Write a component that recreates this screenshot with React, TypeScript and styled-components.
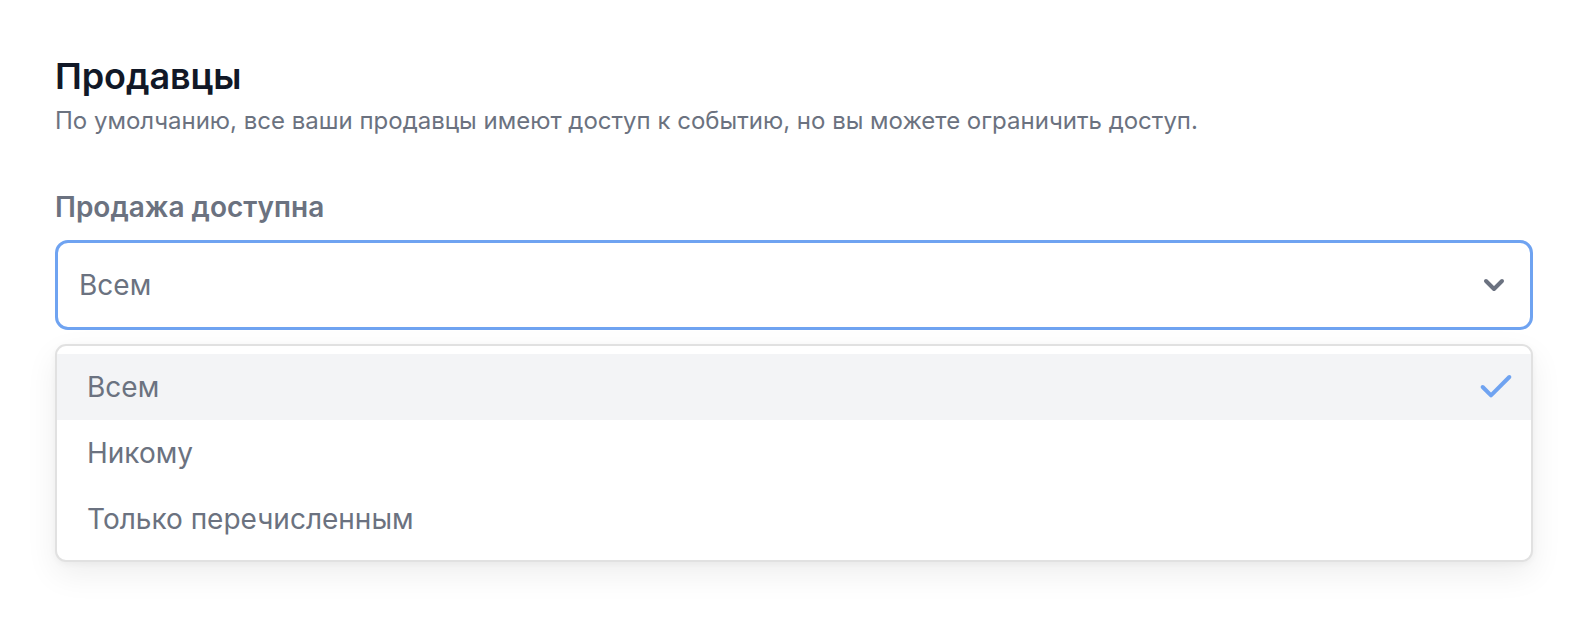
import React from 'react';
import styled, {createGlobalStyle} from 'styled-components';
import {Check, ChevronDown} from 'lucide-react';

const GlobalStyle = createGlobalStyle`
  html, body {
    margin: 0;
    padding: 0;
    background: #ffffff;
    font-family: Inter, 'Noto Sans', sans-serif;
    -webkit-font-smoothing: antialiased;
  }
`;

const Page = styled.div`
  padding: 56px 57px 0 55px;
  box-sizing: border-box;
  width: 1590px;
  height: 618px;
`;

const Title = styled.h2`
  margin: 0;
  color: #111827;
  font-size: 36px;
  font-weight: 600;
  line-height: 40px;
  letter-spacing: -0.1px;
`;

const Description = styled.p`
  margin: 9px 0 0 0;
  color: #6b7280;
  font-size: 24px;
  font-weight: 400;
  line-height: 32px;
`;

const Field = styled.div`
  margin-top: 54px;
  display: flex;
  flex-direction: column;
`;

const Label = styled.label`
  color: #6b7280;
  font-size: 28px;
  font-weight: 600;
  line-height: 32px;
`;

const SelectButton = styled.button`
  margin-top: 17px;
  height: 90px;
  width: 100%;
  box-sizing: border-box;
  display: flex;
  align-items: center;
  justify-content: space-between;
  padding: 0 20px 0 21px;
  background: #ffffff;
  border: 3px solid #6fa3f1;
  border-radius: 13px;
  color: #6b7280;
  font-family: inherit;
  font-size: 28px;
  line-height: 34px;
  text-align: left;
`;

const Options = styled.ul`
  margin: 14px 0 0 0;
  padding: 8px 0;
  list-style: none;
  border: 2px solid #e1e1e1;
  border-radius: 11px;
  background: #ffffff;
  box-shadow: 0 12px 32px rgba(0, 0, 0, 0.07), 0 2px 6px rgba(0, 0, 0, 0.04);
`;

const Option = styled.li<{$active?: boolean}>`
  height: 66px;
  display: flex;
  align-items: center;
  justify-content: space-between;
  padding: 0 15px 0 30px;
  background: ${({$active}) => ($active ? '#f3f4f6' : 'transparent')};
  color: #6b7280;
  font-size: 28px;
  line-height: 34px;
`;

const options = ['Всем', 'Никому', 'Только перечисленным'];

const App = () => {
  const selected = 'Всем';
  return (
    <Page>
      <GlobalStyle />
      <Title>Продавцы</Title>
      <Description>
        По умолчанию, все ваши продавцы имеют доступ к событию, но вы можете ограничить доступ.
      </Description>
      <Field>
        <Label>Продажа доступна</Label>
        <SelectButton type="button">
          <span>{selected}</span>
          <ChevronDown size={32} strokeWidth={3} color="#6b7280" />
        </SelectButton>
        <Options>
          {options.map((option) => (
            <Option key={option} $active={option === selected}>
              <span>{option}</span>
              {option === selected && <Check size={40} strokeWidth={2.4} color="#6fa3f1" />}
            </Option>
          ))}
        </Options>
      </Field>
    </Page>
  );
};

export default App;
